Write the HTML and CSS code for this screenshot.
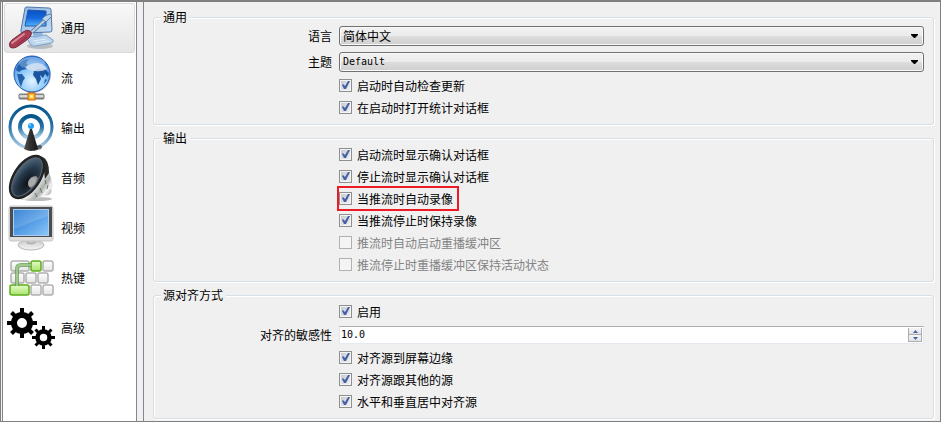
FILE: index.html
```
<!DOCTYPE html>
<html lang="zh-CN">
<head>
    <meta charset="UTF-8">
    <meta name="viewport" content="width=device-width, initial-scale=1.0">
    <title>设置</title>
    <link rel="stylesheet" href="styles.css">
</head>
<body>
    <div class="window">
        <nav class="sidebar">
            <button type="button" class="nav-item active">
                <svg class="icon" viewBox="0 0 48 48">
                    <defs>
                        <linearGradient id="pcFrame" x1="0" y1="0" x2="1" y2="1">
                            <stop offset="0" stop-color="#8fb8e2"/>
                            <stop offset="1" stop-color="#c3daf1"/>
                        </linearGradient>
                        <linearGradient id="pcScreen" x1="0" y1="0" x2="0" y2="1">
                            <stop offset="0" stop-color="#0a4fc4"/>
                            <stop offset="0.5" stop-color="#1468dc"/>
                            <stop offset="1" stop-color="#4fb0ff"/>
                        </linearGradient>
                    </defs>
                    <ellipse cx="33" cy="42" rx="13" ry="3" fill="#8a94a0" opacity="0.5"/>
                    <path d="M19 33 L39 31 L46 36 Q47 38 45 39 L29 42 Q26 43 24 41 Z" fill="#bdd5ec" stroke="#7d9fc6"/>
                    <path d="M26 37 L39 35 M28 39 L42 37" stroke="#e2effa"/>
                    <path d="M25 26 L35 26 L36 32 L27 34 Z" fill="#8db3db"/>
                    <path d="M18 4 Q18 3 20 3 L42 4 Q44 4 44 6 L45 26 Q45 28 43 28 L16 29 Q13 29 14 26 Z" fill="url(#pcFrame)" stroke="#4f78a9"/>
                    <path d="M21 6 L39 7 L39 22 L18 22 Z" fill="url(#pcScreen)" stroke="#2458a8"/>
                    <path d="M25 28 L38 16" stroke="#5e7fa6" stroke-width="4"/>
                    <path d="M25 28 L38 16" stroke="#b9d2ec" stroke-width="2"/>
                    <path d="M35 15 L38 12 L43 10 L45 12 L42 15 L39 18 Z" fill="#b9d2ec" stroke="#5e7fa6"/>
                    <path d="M3 43 Q1 39 5 36 L16 28 Q20 25 23 27 Q26 29 23 33 Q19 37 14 40 Q7 46 3 43 Z" fill="#a93f55" stroke="#79293d"/>
                    <path d="M5 39 L17 30" stroke="#dc8b98" stroke-width="2" stroke-linecap="round"/>
                    <path d="M10 41 L20 33" stroke="#8b2c42" stroke-width="1"/>
                </svg>
                <span>通用</span>
            </button>
            <button type="button" class="nav-item">
                <svg class="icon" viewBox="0 0 48 48">
                    <defs>
                        <radialGradient id="globe" cx="0.5" cy="0.7" r="0.75">
                            <stop offset="0" stop-color="#e2f5ff"/>
                            <stop offset="0.5" stop-color="#8ac6f8"/>
                            <stop offset="1" stop-color="#2a74d6"/>
                        </radialGradient>
                        <linearGradient id="pipe" x1="0" y1="0" x2="0" y2="1">
                            <stop offset="0" stop-color="#777"/>
                            <stop offset="0.4" stop-color="#f2f2f2"/>
                            <stop offset="1" stop-color="#666"/>
                        </linearGradient>
                    </defs>
                    <rect x="22" y="34" width="5" height="7" fill="#a8a8a8" stroke="#777"/>
                    <circle cx="26" cy="21" r="18" fill="#777" opacity="0.3"/>
                    <circle cx="25" cy="20" r="18" fill="url(#globe)" stroke="#1f57ad"/>
                    <path d="M9 16 Q11 9 17 6 L22 5 L19 9 L21 11 L18 13 L20 15 L15 16 L12 18 Z" fill="#2361ad"/>
                    <path d="M10 20 L15 20 L18 24 L16 27 L14 33 L12 28 Z" fill="#2361ad"/>
                    <path d="M27 17 L31 15 L38 15 L42 19 L41 23 L38 20 L36 24 L33 21 L34 25 L31 31 L29 25 L26 21 Z" fill="#1b559f"/>
                    <path d="M38 25 L40 26 L37 30 Z" fill="#2361ad"/>
                    <ellipse cx="25" cy="9" rx="13" ry="6" fill="#fff" opacity="0.25"/>
                    <path d="M19 14 Q22 9 31 9 Q38 10 40 15 Q35 18 28 17 Q22 17 19 14 Z" fill="#d3dff0" opacity="0.85"/>
                    <rect x="12" y="40" width="25" height="5" rx="1" fill="url(#pipe)" stroke="#777"/>
                    <rect x="21" y="39" width="7" height="7" fill="#ffb52e" stroke="#d9660b"/>
                    <rect x="23" y="41" width="3" height="3" fill="#fff09a"/>
                </svg>
                <span>流</span>
            </button>
            <button type="button" class="nav-item">
                <svg class="icon" viewBox="0 0 48 48">
                    <defs>
                        <linearGradient id="wave" x1="0" y1="0" x2="0" y2="1">
                            <stop offset="0" stop-color="#045489"/>
                            <stop offset="0.5" stop-color="#2873a8"/>
                            <stop offset="1" stop-color="#b2d0e6"/>
                        </linearGradient>
                        <linearGradient id="cone" x1="0" y1="0" x2="1" y2="0">
                            <stop offset="0" stop-color="#555"/>
                            <stop offset="0.4" stop-color="#333"/>
                            <stop offset="1" stop-color="#161616"/>
                        </linearGradient>
                    </defs>
                    <circle cx="24" cy="23" r="21" fill="none" stroke="url(#wave)" stroke-width="3"/>
                    <circle cx="24" cy="23" r="11" fill="none" stroke="url(#wave)" stroke-width="4"/>
                    <path d="M24 43 L33 41 Q37 42 34 45 L27 47 Z" fill="#000" opacity="0.55"/>
                    <path d="M23 25 L25 25 L31 45 Q24 49 17 45 Z" fill="url(#cone)"/>
                    <circle cx="24" cy="22" r="3" fill="#209cf2"/>
                    <circle cx="23" cy="21" r="1" fill="#8bd5ff"/>
                </svg>
                <span>输出</span>
            </button>
            <button type="button" class="nav-item">
                <svg class="icon" viewBox="0 0 48 48">
                    <defs>
                        <linearGradient id="metal" x1="0" y1="0" x2="1" y2="1">
                            <stop offset="0.3" stop-color="#666"/>
                            <stop offset="0.55" stop-color="#f2f2f2"/>
                            <stop offset="0.7" stop-color="#a9afab"/>
                            <stop offset="0.8" stop-color="#f4f4f4"/>
                            <stop offset="1" stop-color="#6b6b6b"/>
                        </linearGradient>
                        <radialGradient id="woofer" cx="0.65" cy="0.6" r="0.65">
                            <stop offset="0" stop-color="#0d1218"/>
                            <stop offset="0.6" stop-color="#27394a"/>
                            <stop offset="1" stop-color="#4c6479"/>
                        </radialGradient>
                    </defs>
                    <ellipse cx="30" cy="45" rx="15" ry="2" fill="#777" opacity="0.5"/>
                    <path d="M34 2 Q41 4 42 18 L45 28 Q47 31 44 34 Q46 38 42 41 L36 42 L29 45 L14 46 Z" fill="url(#metal)"/>
                    <path d="M38 26 L39 30 M33 34 L35 39 M41 31 L40 35 M28 39 L30 43" stroke="#6a716d"/>
                    <path d="M35 3 Q42 5 42 19 L38 25 Z" fill="#292929"/>
                    <ellipse cx="20" cy="23" rx="14" ry="25" transform="rotate(34 20 23)" fill="#202224"/>
                    <ellipse cx="20" cy="23" rx="11" ry="22" transform="rotate(34 20 23)" fill="url(#woofer)" stroke="#5a6670"/>
                    <path d="M21 28 Q23 22 29 22 L31 24 Q29 31 24 34 Q21 33 21 28 Z" fill="#929497"/>
                    <ellipse cx="25" cy="28" rx="3" ry="5" transform="rotate(34 25 28)" fill="#aaa"/>
                </svg>
                <span>音频</span>
            </button>
            <button type="button" class="nav-item">
                <svg class="icon" viewBox="0 0 48 48">
                    <defs>
                        <linearGradient id="lcd" x1="0" y1="0" x2="1" y2="1">
                            <stop offset="0" stop-color="#1d72cf"/>
                            <stop offset="1" stop-color="#8ac6fa"/>
                        </linearGradient>
                        <linearGradient id="stand" x1="0" y1="0" x2="0" y2="1">
                            <stop offset="0" stop-color="#c9c9c9"/>
                            <stop offset="1" stop-color="#f6f6f6"/>
                        </linearGradient>
                    </defs>
                    <ellipse cx="24" cy="41" rx="13" ry="5" fill="url(#stand)" stroke="#b9b9b9"/>
                    <path d="M20 34 H28 V39 Q24 41 20 39 Z" fill="#c3c3c3" stroke="#aaa"/>
                    <rect x="2" y="2" width="44" height="35" rx="2" fill="#dedede" stroke="#c6c6c6"/>
                    <rect x="3" y="3" width="42" height="30" fill="#4a4e52"/>
                    <rect x="6" y="5" width="36" height="27" fill="#a9cdf0"/>
                    <rect x="7" y="6" width="34" height="25" fill="url(#lcd)"/>
                    <path d="M7 25 L41 12 V6 H7 Z" fill="#fff" opacity="0.15"/>
                </svg>
                <span>视频</span>
            </button>
            <button type="button" class="nav-item">
                <svg class="icon" viewBox="0 0 48 48">
                    <defs>
                        <linearGradient id="key" x1="0" y1="0" x2="0" y2="1">
                            <stop offset="0" stop-color="#fff"/>
                            <stop offset="1" stop-color="#e4e4e4"/>
                        </linearGradient>
                        <linearGradient id="keyOn" x1="0" y1="0" x2="0" y2="1">
                            <stop offset="0" stop-color="#e4fbc8"/>
                            <stop offset="1" stop-color="#a9e36b"/>
                        </linearGradient>
                    </defs>
                    <g fill="url(#key)" stroke="#b0b0b0" stroke-width="1.5">
                        <rect x="4" y="7" width="18" height="10" rx="2"/>
                        <rect x="36" y="7" width="10" height="10" rx="2"/>
                        <rect x="4" y="19" width="13" height="10" rx="2"/>
                        <rect x="19" y="19" width="10" height="10" rx="2"/>
                        <rect x="31" y="19" width="10" height="10" rx="2"/>
                        <rect x="24" y="31" width="10" height="10" rx="2"/>
                        <rect x="36" y="31" width="10" height="10" rx="2"/>
                    </g>
                    <g fill="url(#keyOn)" stroke="#5cad1b" stroke-width="1.5">
                        <rect x="24" y="7" width="10" height="10" rx="2"/>
                        <rect x="3" y="31" width="19" height="10" rx="2"/>
                    </g>
                    <path d="M10 32 V15 Q10 11 14 11 H24" fill="none" stroke="#5f9a48" stroke-width="4" opacity="0.75"/>
                    <path d="M10 32 V15 Q10 11 14 11 H24" fill="none" stroke="#a8cf98" stroke-width="2" opacity="0.8"/>
                </svg>
                <span>热键</span>
            </button>
            <button type="button" class="nav-item">
                <svg class="icon" viewBox="0 0 48 48">
                    <g fill="none" stroke="#000">
                        <circle cx="15" cy="19" r="8" stroke-width="6"/>
                        <path d="M15 4 V10 M15 28 V34 M0 19 H6 M24 19 H30 M4.5 8.5 L9 13 M21 25 L25.5 29.5 M4.5 29.5 L9 25 M21 13 L25.5 8.5" stroke-width="4"/>
                        <circle cx="36.5" cy="33.5" r="6" stroke-width="4.5"/>
                        <path d="M36.5 22 V27 M36.5 40 V45 M25 33.5 H30 M43 33.5 H48 M28.5 25.5 L32 29 M41 38 L44.5 41.5 M28.5 41.5 L32 38 M41 29 L44.5 25.5" stroke-width="3"/>
                    </g>
                </svg>
                <span>高级</span>
            </button>
        </nav>

        <main class="panel">
            <fieldset class="group">
                <legend>通用</legend>
                <div class="form">
                    <label class="field-label" for="language">语言</label>
                    <select class="field" id="language">
                        <option>简体中文</option>
                    </select>
                    <label class="field-label" for="theme">主题</label>
                    <select class="field latin" id="theme">
                        <option>Default</option>
                    </select>
                    <label class="check"><input type="checkbox" checked>启动时自动检查更新</label>
                    <label class="check"><input type="checkbox" checked>在启动时打开统计对话框</label>
                </div>
            </fieldset>

            <fieldset class="group">
                <legend>输出</legend>
                <div class="form">
                    <label class="check"><input type="checkbox" checked>启动流时显示确认对话框</label>
                    <label class="check"><input type="checkbox" checked>停止流时显示确认对话框</label>
                    <label class="check highlight"><input type="checkbox" checked>当推流时自动录像</label>
                    <label class="check"><input type="checkbox" checked>当推流停止时保持录像</label>
                    <label class="check disabled"><input type="checkbox" disabled>推流时自动启动重播缓冲区</label>
                    <label class="check disabled"><input type="checkbox" disabled>推流停止时重播缓冲区保持活动状态</label>
                </div>
            </fieldset>

            <fieldset class="group">
                <legend>源对齐方式</legend>
                <div class="form">
                    <label class="check"><input type="checkbox" checked>启用</label>
                    <label class="field-label" for="sensitivity">对齐的敏感性</label>
                    <div class="field spinbox">
                        <input type="text" class="latin" id="sensitivity" value="10.0">
                        <div class="spin-buttons">
                            <button type="button" id="spinUp" aria-label="增加"><svg viewBox="0 0 5 3"><path d="M0 3 L2.5 0 L5 3 Z"/></svg></button>
                            <button type="button" id="spinDown" aria-label="减少"><svg viewBox="0 0 5 3"><path d="M0 0 L2.5 3 L5 0 Z"/></svg></button>
                        </div>
                    </div>
                    <label class="check"><input type="checkbox" checked>对齐源到屏幕边缘</label>
                    <label class="check"><input type="checkbox" checked>对齐源跟其他的源</label>
                    <label class="check"><input type="checkbox" checked>水平和垂直居中对齐源</label>
                </div>
            </fieldset>
        </main>
    </div>

    <script>
        const sensitivity = document.getElementById('sensitivity');

        function step(amount) {
            const value = Math.max(0, (parseFloat(sensitivity.value) || 0) + amount);
            sensitivity.value = value.toFixed(1);
        }

        document.getElementById('spinUp').addEventListener('click', () => step(0.5));
        document.getElementById('spinDown').addEventListener('click', () => step(-0.5));

        // Switch the selected page
        const items = document.querySelectorAll('.nav-item');
        items.forEach(item => {
            item.addEventListener('click', () => {
                items.forEach(other => other.classList.remove('active'));
                item.classList.add('active');
            });
        });
    </script>
</body>
</html>
```
FILE: styles.css
```
:root {
    --window-color: #f0f0f0;
    --frame-color: #808080;
    --group-border: #d5dfe5;
    --text-color: #000000;
    --disabled-color: #838383;
    --highlight-color: #ed1c24;
}

* {
    margin: 0;
    padding: 0;
    box-sizing: border-box;
}

body {
    font-family: "Noto Sans CJK SC", sans-serif;
    font-size: 12px;
    line-height: 16px;
    color: var(--text-color);
    background-color: var(--window-color);
}

button, input, select {
    font: inherit;
    color: inherit;
}

.window {
    display: flex;
    gap: 6px;
    min-height: 100vh;
    padding-left: 1px;
    border: 1px solid var(--frame-color);
    border-top-width: 2px;
}

/* Sidebar */
.sidebar {
    flex: 0 0 135px;
    padding: 1px;
    background-color: #ffffff;
    border: solid #828790;
    border-width: 0 1px;
}

.nav-item {
    display: flex;
    align-items: center;
    gap: 6px;
    width: 100%;
    height: 50px;
    padding: 0 2px;
    background: none;
    border: 1px solid transparent;
    border-radius: 3px;
    text-align: left;
}

.nav-item.active {
    background: linear-gradient(#f8f8f8, #e5e5e5);
    border-color: #d9d9d9;
}

.icon {
    width: 48px;
    height: 48px;
}

/* Settings panel */
.panel {
    flex: 1;
    min-width: 0;
    padding: 15px 6px 2px 9px;
    border-left: 1px solid #828790;
}

.group {
    position: relative;
    min-width: 0;
    border: 1px solid var(--group-border);
    border-radius: 3px;
    box-shadow: inset 1px 1px #ffffff, 1px 1px #ffffff;
}

.group + .group {
    margin-top: 13px;
}

/* The caption sits on the top border */
legend {
    position: absolute;
    top: -9px;
    left: 7px;
    padding: 0 3px 0 2px;
    background-color: var(--window-color);
}

.form {
    display: grid;
    grid-template-columns: 178px 1fr;
    gap: 1px 7px;
    align-items: center;
    padding: 5px 9px 6px 0;
}

.field-label {
    text-align: right;
}

.field {
    grid-column: 2;
    width: 100%;
    margin: 3px 0 2px;
}

.latin {
    font-family: "DejaVu Sans Mono", monospace;
    font-size: 10px;
}

select {
    appearance: none;
    height: 20px;
    padding: 0 20px 0 3px;
    line-height: 18px;
    border: 1px solid #707070;
    border-radius: 3px;
    box-shadow: inset 0 0 0 1px #fafafa;
    background:
        url("data:image/svg+xml,%3Csvg xmlns='http://www.w3.org/2000/svg' width='7' height='4'%3E%3Cpath d='M0 0h7v1L4 4H3L0 1z'/%3E%3C/svg%3E") no-repeat right 5px center,
        linear-gradient(#f2f2f2, #ebebeb 50%, #dddddd 50%, #cfcfcf);
}

.check {
    grid-column: 2;
    justify-self: start;
    display: flex;
    align-items: center;
    gap: 5px;
    height: 21px;
    padding-right: 4px;
}

.check input {
    appearance: none;
    width: 13px;
    height: 13px;
    border: 1px solid #8e8f8f;
    box-shadow: inset 0 0 0 1px #f4f4f4;
    background: linear-gradient(135deg, #c3c8ce, #f3f3f3);
}

.check input:checked {
    background:
        url("data:image/svg+xml,%3Csvg xmlns='http://www.w3.org/2000/svg' width='11' height='11'%3E%3Cpath d='M2 5l1-1 2 2 3-5h2L6 9H4z' fill='%234560a5'/%3E%3C/svg%3E") no-repeat center,
        linear-gradient(135deg, #c3c8ce, #f3f3f3);
}

.check.disabled {
    color: var(--disabled-color);
}

.check.disabled input {
    border-color: #b1b1b1;
    background: #f4f4f4;
}

.highlight {
    outline: 2px solid var(--highlight-color);
}

.spinbox {
    display: flex;
    height: 18px;
    background-color: #ffffff;
    border: 1px solid #e3e9ef;
    border-top-color: #abadb3;
}

.spinbox input {
    flex: 1;
    min-width: 0;
    padding-left: 1px;
    border: none;
    outline: none;
    background: none;
}

.spin-buttons {
    display: flex;
    flex-direction: column;
    width: 14px;
    margin: 1px;
    border: 1px solid #abadb3;
    border-top: none;
}

.spin-buttons button {
    display: flex;
    flex: 1;
    align-items: center;
    justify-content: center;
    border: none;
    background: linear-gradient(#f6f6f6, #e2e2e2);
}

.spin-buttons button + button {
    border-top: 1px solid #abadb3;
}

.spin-buttons svg {
    width: 5px;
    height: 3px;
    fill: #4560a5;
}
```
